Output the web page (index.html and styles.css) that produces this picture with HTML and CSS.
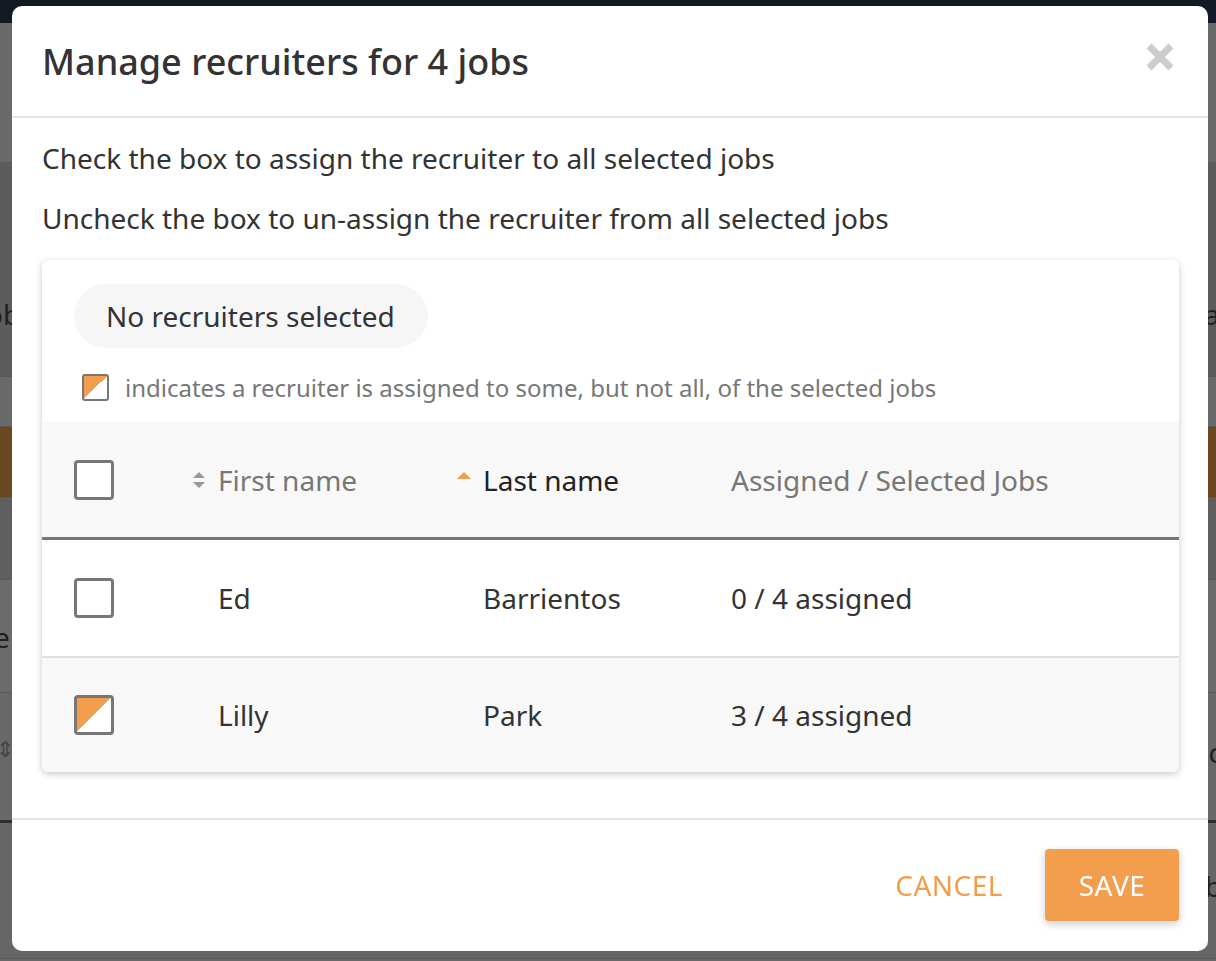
FILE: index.html
```html
<!DOCTYPE html>
<html lang="en">
<head>
    <meta charset="UTF-8">
    <title>Manage recruiters</title>
    <link rel="stylesheet" href="styles.css">
</head>
<body>
    <div class="page">
        <div class="topbar"></div>
        <div class="bg-row bg-a"></div>
        <div class="bg-row bg-b"><span class="bg-txt left">ob</span><span class="bg-txt right">a</span></div>
        <div class="bg-row bg-c"></div>
        <div class="bg-row bg-orange"></div>
        <div class="bg-row bg-d"></div>
        <div class="bg-row bg-e"><span class="bg-txt left">e</span></div>
        <div class="bg-row bg-f"><span class="bg-txt left">&#8661;</span><span class="bg-txt right">c</span></div>
        <div class="bg-row bg-g"><span class="bg-txt bottom">Hospice</span><span class="bg-txt right">b</span></div>
    </div>

    <div class="overlay">
        <div class="modal">
            <div class="modal-header">
                <h2 class="modal-title">Manage recruiters for 4 jobs</h2>
                <button class="close-btn" aria-label="Close">
                    <svg width="30" height="30" viewBox="0 0 30 30">
                        <path d="M4 4 L26 26 M26 4 L4 26" stroke="#cccccc" stroke-width="7" stroke-linecap="butt"/>
                    </svg>
                </button>
            </div>

            <div class="modal-body">
                <p class="hint">Check the box to assign the recruiter to all selected jobs</p>
                <p class="hint">Uncheck the box to un-assign the recruiter from all selected jobs</p>

                <div class="card">
                    <div class="card-top">
                        <div class="pill">No recruiters selected</div>
                        <div class="legend">
                            <span class="mini-box partial"></span>
                            <span>indicates a recruiter is assigned to some, but not all, of the selected jobs</span>
                        </div>
                    </div>

                    <div class="grid-row head">
                        <div class="cell"><span class="box"></span></div>
                        <div class="cell sort">
                            <svg class="sort-icon" width="14" height="20" viewBox="0 0 14 20">
                                <path d="M1 8 L7 2 L13 8 Z M1 12 L7 18 L13 12 Z" fill="#999999"/>
                            </svg>
                            First name
                        </div>
                        <div class="cell sort active">
                            <svg class="sort-icon" width="14" height="20" viewBox="0 0 14 20">
                                <path d="M0 9 L7 2 L14 9 Z" fill="#f29e4c"/>
                            </svg>
                            Last name
                        </div>
                        <div class="cell">Assigned / Selected Jobs</div>
                    </div>

                    <div class="grid-row">
                        <div class="cell"><span class="box"></span></div>
                        <div class="cell name">Ed</div>
                        <div class="cell name">Barrientos</div>
                        <div class="cell">0 / 4 assigned</div>
                    </div>

                    <div class="grid-row alt">
                        <div class="cell"><span class="box partial"></span></div>
                        <div class="cell name">Lilly</div>
                        <div class="cell name">Park</div>
                        <div class="cell">3 / 4 assigned</div>
                    </div>
                </div>
            </div>

            <div class="modal-footer">
                <button class="btn-text">CANCEL</button>
                <button class="btn-save">SAVE</button>
            </div>
        </div>
    </div>
</body>
</html>
```

FILE: styles.css
```css
* { box-sizing: border-box; }
body { margin: 0; font-family: "Noto Sans", "Open Sans", sans-serif; color: #333; background: #686868; overflow: hidden; }

/* dimmed page underneath */
.page { height: 961px; }
.topbar { height: 23px; background: #141a24; }
.bg-row { position: relative; border-bottom: 1px solid #595959; }
.bg-a { height: 140px; background: #6a6a6a; }
.bg-b { height: 214px; background: #5c5c5c; }
.bg-c { height: 50px; background: #6a6a6a; }
.bg-orange { height: 71px; background: #6b4722; }
.bg-d { height: 82px; background: #5f5f5f; }
.bg-e { height: 113px; background: #6b6b6b; }
.bg-f { height: 130px; background: #686868; border-bottom: 3px solid #2e2e2e; }
.bg-g { height: 136px; background: #666; }
.bg-txt { position: absolute; font-size: 28px; color: #1f1f1f; }
.bg-b .left { left: -14px; top: 132px; }
.bg-b .right { right: -4px; top: 132px; }
.bg-e .left { left: -6px; top: 38px; }
.bg-f .left { left: -4px; top: 40px; color: #444; font-size: 22px; }
.bg-f .right { right: -6px; top: 40px; }
.bg-g .right { right: -6px; top: 44px; }
.bg-g .bottom { left: 24px; top: 90px; color: #4a2c10; }

.overlay { position: fixed; inset: 0; }
.modal {
    margin: 6px 0 0 12px;
    width: 1196px;
    height: 945px;
    background: #fff;
    border-radius: 10px;
    display: flex;
    flex-direction: column;
}

.modal-header {
    height: 112px;
    flex-shrink: 0;
    border-bottom: 2px solid #e5e5e5;
    display: flex;
    align-items: center;
    justify-content: space-between;
    padding: 0 33px 0 30px;
}
.modal-title { margin: 0; font-size: 36px; font-weight: 500; color: #333; }
.close-btn { background: none; border: none; padding: 0; margin-top: -8px; cursor: pointer; display: flex; }

.modal-body { padding: 20px 29px 0 30px; }
.hint { margin: 0; font-size: 28px; line-height: 40px; height: 60px; color: #333; }
.hint + .hint { height: 62px; }

.card {
    border-radius: 6px;
    background: #fff;
    box-shadow: 0 2px 7px rgba(0, 0, 0, 0.22);
    overflow: hidden;
}
.card-top { padding: 24px 32px 0 32px; height: 162px; }
.pill {
    display: inline-flex;
    align-items: center;
    height: 64px;
    padding: 0 33px 0 32px;
    border-radius: 32px;
    background: #f6f6f6;
    font-size: 28px;
    color: #333;
}
.legend { display: flex; align-items: center; gap: 16px; margin: 23px 0 0 8px; font-size: 24px; color: #777; }

.mini-box { width: 27px; height: 27px; flex-shrink: 0; border: 2px solid #777; border-radius: 3px; background: #fff; }
.box { display: block; width: 40px; height: 40px; border: 3px solid #777; border-radius: 4px; background: #fff; }
.partial { background: linear-gradient(to bottom right, #f29e4c 50%, #fff 50%); }

.grid-row {
    display: grid;
    grid-template-columns: 118px 265px 274px 1fr;
    align-items: center;
    padding-left: 32px;
    height: 118px;
    border-bottom: 2px solid #e0e0e0;
    font-size: 28px;
    color: #333;
}
.grid-row:last-child { border-bottom: none; height: 114px; }
.grid-row.head { height: 118px; background: #f8f8f8; border-bottom: 3px solid #777; color: #777; }
.grid-row.alt { background: #f8f8f8; }
.cell.name { padding-left: 26px; }
.sort { display: flex; align-items: center; gap: 12px; }
.sort.active { color: #222; }

.modal-footer {
    margin-top: 46px;
    border-top: 2px solid #e5e5e5;
    display: flex;
    justify-content: flex-end;
    align-items: flex-start;
    padding: 29px 29px 0 0;
}
.btn-text {
    background: none;
    border: none;
    height: 72px;
    padding: 0 42px 0 21px;
    font-family: inherit;
    font-size: 28px;
    letter-spacing: 0.5px;
    color: #f29e4c;
    cursor: pointer;
}
.btn-save {
    width: 134px;
    height: 72px;
    border: none;
    border-radius: 4px;
    background: #f29e4c;
    color: #fff;
    font-family: inherit;
    font-size: 28px;
    letter-spacing: 0.5px;
    box-shadow: 0 3px 8px rgba(0, 0, 0, 0.2);
    cursor: pointer;
}
```
